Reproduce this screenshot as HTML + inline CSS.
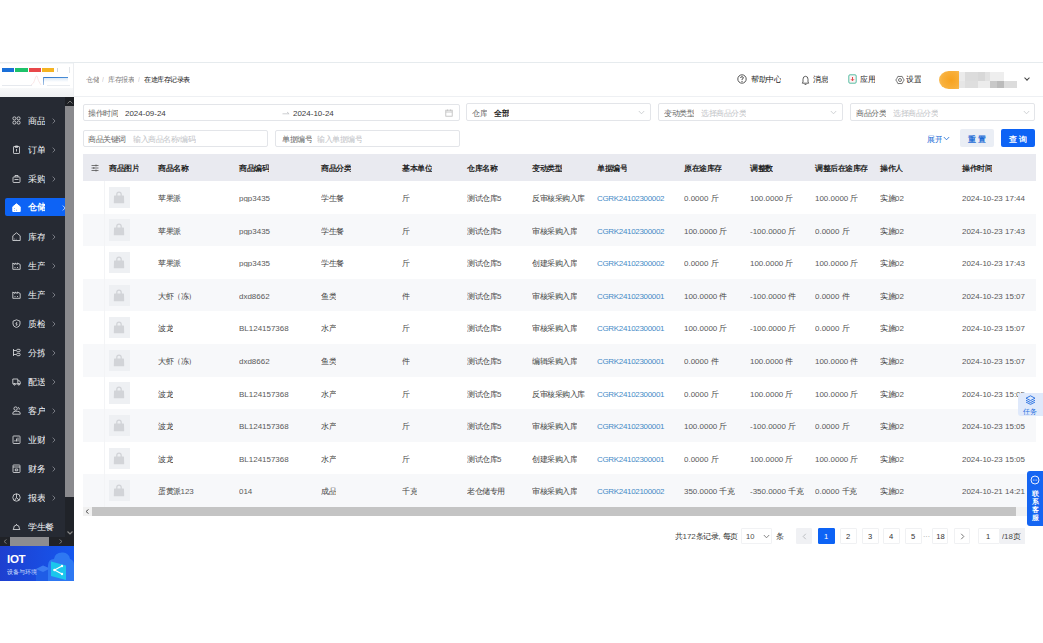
<!DOCTYPE html><html><head><meta charset="utf-8"><style>*{box-sizing:border-box;margin:0;padding:0}
html,body{width:1043px;height:643px;overflow:hidden;background:#fff}
body{position:relative;font-family:"Liberation Sans",sans-serif;color:#333}
.a{position:absolute;white-space:nowrap}
.topline{left:0;top:62px;width:1043px;height:1px;background:#e6ebee}
.logo{left:0;top:63px;width:74px;height:34px;background:#fff;border-right:1px solid #eceef1}
.logo .band{position:absolute;left:0;top:24.5px;width:73px;height:9.5px;background:linear-gradient(#f8f9fa,#eff0f2)}
.bar{position:absolute;top:5.3px;height:3.6px}
.hdr{left:74px;top:63px;width:969px;height:34px;background:#fff;border-bottom:1px solid #eef0f3}
.bc{font-size:6.5px;top:77px;line-height:7px;color:#8a8a8a}
.hi{font-size:7.6px;top:75px;line-height:9px;color:#333}
.side{left:0;top:97px;width:74px;height:448.5px;background:#262a33;overflow:hidden}
.mi{position:absolute;left:0;width:65px;height:18px;color:#e9eaec;font-size:8.2px;line-height:18px}
.mi .ic{position:absolute;left:12px;top:4.5px;width:9px;height:9px}
.mi .t{position:absolute;left:27.5px;top:0}
.mi .ch{position:absolute;left:51px;top:0;color:#7b7f88;font-size:8px}
.mi.act{left:5px;width:60px;background:#0d63f5;border-radius:2px 0 0 2px;color:#fff;font-weight:bold}
.mi.act .ic{left:7.3px}.mi.act .t{left:23.4px}.mi.act .ch{left:57px;color:#cfe0ff}
.vs{position:absolute;left:65px;top:0;width:9px;height:440px;background:#202329}
.vs .up{position:absolute;left:0;top:0;width:9px;height:9px;background:#1d1f24}
.vs .th{position:absolute;left:0;top:9px;width:9px;height:391px;background:#8a8a8e}
.hs{position:absolute;left:0;top:440px;width:74px;height:8.5px;background:#202227}
.hs .th{position:absolute;left:10px;top:0;width:39px;height:8.5px;background:#8d8d90}
.iot{left:0;top:545.5px;width:74px;height:35px;background:linear-gradient(90deg,#1e3fcf,#1a4bdf 50%,#1557ee);overflow:hidden}
.box{position:absolute;border:1px solid #e3e5e9;border-radius:2px;background:#fff;font-size:7.6px;line-height:15.8px}
.box .l{position:absolute;top:0;color:#666}
.box .v{position:absolute;top:0;color:#222}
.box .p{position:absolute;top:0;color:#c2c4c8}
.btn{position:absolute;height:17.6px;border-radius:2px;font-size:7.6px;line-height:17.6px;text-align:center}
.thd{position:absolute;left:82.5px;top:154px;width:953px;height:27px;background:#e9eaf0}
.row{position:absolute;left:82.5px;width:953px;height:32.6px}
.row.g{background:#f7f8fa}
.tt{position:absolute;font-size:7.6px;line-height:9px;white-space:nowrap;color:#333}
.hd{font-weight:bold;color:#222}
.img{position:absolute;left:108.8px;width:21.2px;height:21.2px;background:#eef0f3}
.lnk{color:#2b7bc0}
.pg{position:absolute;top:528px;height:16px;width:16.5px;border:1px solid #eceef1;border-radius:2px;font-size:7.6px;line-height:14px;text-align:center;color:#333}
</style></head><body>
<div class="a topline"></div>
<div class="a logo">
  <div class="bar" style="left:2px;width:12px;background:#1a6fd8"></div>
  <div class="bar" style="left:15px;width:12.7px;background:#1ec26a"></div>
  <div class="bar" style="left:28.8px;width:11.8px;background:#e8484a"></div>
  <div class="bar" style="left:42px;width:12px;background:#f5b321"></div>
  <div style="position:absolute;left:43px;top:13.6px;width:25px;height:1.6px;background:linear-gradient(90deg,#2f76cc,#4b8fd6)"></div>
  <div style="position:absolute;left:43px;top:13.6px;width:0.9px;height:8px;background:linear-gradient(#5a8fcf,#a9c6e8)"></div>
  <div style="position:absolute;left:2px;top:22px;width:30px;height:0.8px;background:#e6e9ee"></div>
  <div style="position:absolute;left:44px;top:15px;width:24px;height:4px;background:linear-gradient(#dbe8f6,rgba(255,255,255,0))"></div>
  <div style="position:absolute;left:47px;top:22px;width:23px;height:0.6px;background:#e9ecf0"></div>
  <svg style="position:absolute;left:30px;top:10px" width="12" height="13" viewBox="0 0 12 13"><path d="M1 12 Q4 11 5 6 Q6 2 7 3 Q8 8 11 12" fill="none" stroke="#f5d8da" stroke-width="0.6"/></svg>
  <div style="position:absolute;left:57px;top:5px;width:0.8px;height:3.5px;background:#cfd3d8"></div>
  <div style="position:absolute;left:69px;top:4px;width:0.8px;height:6px;background:#e2e5e9"></div>
  <div style="position:absolute;left:0px;top:0px;width:73px;height:1px;background:#f4f6f8"></div>
  <div class="band"></div>
</div>
<div class="a hdr"></div>
<div class="a" style="left:85.60px;top:76.08px;font-size:13.00px;line-height:16.90px;color:#7a7a7a;font-weight:normal;transform:scale(.5);transform-origin:0 0;">仓储</div>
<div class="a" style="left:101.50px;top:76.08px;font-size:13.00px;line-height:16.90px;color:#c8c8c8;font-weight:normal;transform:scale(.5);transform-origin:0 0;">/</div>
<div class="a" style="left:107.80px;top:76.08px;font-size:13.00px;line-height:16.90px;color:#7a7a7a;font-weight:normal;transform:scale(.5);transform-origin:0 0;">库存报表</div>
<div class="a" style="left:137.50px;top:76.08px;font-size:13.00px;line-height:16.90px;color:#c8c8c8;font-weight:normal;transform:scale(.5);transform-origin:0 0;">/</div>
<div class="a" style="left:144.00px;top:76.08px;font-size:13.00px;line-height:16.90px;color:#111;font-weight:500;transform:scale(.5);transform-origin:0 0;">在途库存记录表</div>
<svg class="a" style="left:737px;top:74px" width="10" height="10" viewBox="0 0 10 10"><circle cx="5" cy="5" r="4.2" fill="none" stroke="#444" stroke-width="0.9"/><path d="M3.6 4 Q3.6 2.7 5 2.7 Q6.4 2.7 6.4 3.9 Q6.4 4.7 5 5.2 V6" fill="none" stroke="#444" stroke-width="0.9"/><circle cx="5" cy="7.4" r="0.55" fill="#444"/></svg>
<div class="a" style="left:751.00px;top:74.46px;font-size:15.20px;line-height:19.76px;color:#222;font-weight:normal;transform:scale(.5);transform-origin:0 0;">帮助中心</div>
<svg class="a" style="left:801px;top:74.5px" width="9" height="10.5" viewBox="0 0 9 10.5"><path d="M1.3 8.2 H7.7 L7 7 V4.2 Q7 1.3 4.5 1.3 Q2 1.3 2 4.2 V7 Z" fill="none" stroke="#444" stroke-width="0.85" stroke-linejoin="round"/><path d="M3.6 9.6 H5.4" stroke="#444" stroke-width="0.85"/></svg>
<div class="a" style="left:812.50px;top:74.46px;font-size:15.20px;line-height:19.76px;color:#222;font-weight:normal;transform:scale(.5);transform-origin:0 0;">消息</div>
<svg class="a" style="left:848px;top:74px" width="9" height="10" viewBox="0 0 9 10"><rect x="0.8" y="0.8" width="7.4" height="8.4" rx="1.2" fill="#fdf3f4" stroke="#45b89a" stroke-width="0.9"/><path d="M4.5 3 V6.6 M3 5.2 L4.5 6.8 L6 5.2" fill="none" stroke="#e5484d" stroke-width="1"/></svg>
<div class="a" style="left:860.00px;top:74.46px;font-size:15.20px;line-height:19.76px;color:#222;font-weight:normal;transform:scale(.5);transform-origin:0 0;">应用</div>
<svg class="a" style="left:894.5px;top:74.5px" width="10" height="10" viewBox="0 0 10 10"><path d="M9.20 5.00 L8.03 6.75 L7.10 8.64 L5.00 8.50 L2.90 8.64 L1.97 6.75 L0.80 5.00 L1.97 3.25 L2.90 1.36 L5.00 1.50 L7.10 1.36 L8.03 3.25 Z" fill="none" stroke="#555" stroke-width="0.8" stroke-linejoin="round"/><circle cx="5" cy="5" r="1.5" fill="none" stroke="#555" stroke-width="0.8"/></svg>
<div class="a" style="left:905.60px;top:74.46px;font-size:15.20px;line-height:19.76px;color:#222;font-weight:normal;transform:scale(.5);transform-origin:0 0;">设置</div>
<div class="a" style="left:939px;top:70.9px;width:19.5px;height:18px;border-radius:50% 0 0 50%;background:radial-gradient(circle at 60% 50%,#f7a21e,#f8b03c 60%,#fbc76b)"></div>
<div class="a" style="left:958.5px;top:72px;width:6.5px;height:9px;background:#ebebeb"></div>
<div class="a" style="left:965px;top:72px;width:13px;height:9px;background:#dcdcdc"></div>
<div class="a" style="left:978px;top:72px;width:7px;height:9px;background:#d8d8d8"></div>
<div class="a" style="left:985px;top:72px;width:5px;height:9px;background:#e2e2e2"></div>
<div class="a" style="left:990px;top:72px;width:13.5px;height:9px;background:#eeeeee"></div>
<div class="a" style="left:958.5px;top:81px;width:6.5px;height:7px;background:#e6e6e6"></div>
<div class="a" style="left:965px;top:81px;width:13px;height:7px;background:#dedede"></div>
<div class="a" style="left:978px;top:81px;width:12px;height:7px;background:#ececec"></div>
<div class="a" style="left:990px;top:81px;width:7px;height:7px;background:#c8c8c8"></div>
<div class="a" style="left:997px;top:81px;width:7px;height:7px;background:#bbbbbb"></div>
<div class="a" style="left:1004px;top:81px;width:13px;height:7px;background:#dcdcdc"></div>
<div class="a" style="left:1025px;top:75.5px;width:4px;height:4px;border-right:1px solid #444;border-bottom:1px solid #444;transform:rotate(45deg)"></div>
<div class="a side">
<svg style="position:absolute;left:12px;top:18.5px" width="9" height="9" viewBox="0 0 9 9" fill="none" stroke="#e6e7ea" stroke-width="0.8"><rect x="0.9" y="0.9" width="3" height="3" rx="1.3"/><rect x="5.1" y="0.9" width="3" height="3" rx="1.3"/><rect x="0.9" y="5.1" width="3" height="3" rx="1.3"/><rect x="5.1" y="5.1" width="3" height="3" rx="1.3"/></svg>
<div class="a" style="left:27.60px;top:18.67px;font-size:17.00px;line-height:22.10px;color:#f2f3f5;font-weight:normal;transform:scale(.5);transform-origin:0 0;">商品</div>
<svg style="position:absolute;left:51.6px;top:21.1px" width="4" height="6" viewBox="0 0 4 6"><path d="M0.7 0.6 L3 3 L0.7 5.4" fill="none" stroke="#8e9098" stroke-width="0.8"/></svg>
<svg style="position:absolute;left:12px;top:47.5px" width="9" height="9" viewBox="0 0 9 9" fill="none" stroke="#e6e7ea" stroke-width="0.8"><rect x="1.5" y="1.5" width="6" height="7" rx="0.6"/><path d="M3.3 1 H5.7 V2.4 H3.3 Z M4.5 4 V6.5"/></svg>
<div class="a" style="left:27.60px;top:47.67px;font-size:17.00px;line-height:22.10px;color:#f2f3f5;font-weight:normal;transform:scale(.5);transform-origin:0 0;">订单</div>
<svg style="position:absolute;left:51.6px;top:50.1px" width="4" height="6" viewBox="0 0 4 6"><path d="M0.7 0.6 L3 3 L0.7 5.4" fill="none" stroke="#8e9098" stroke-width="0.8"/></svg>
<svg style="position:absolute;left:12px;top:76.5px" width="9" height="9" viewBox="0 0 9 9" fill="none" stroke="#e6e7ea" stroke-width="0.8"><rect x="1" y="3" width="7" height="5.5" rx="0.6"/><path d="M3 3 V1.5 H6 V3 M2.5 5.5 H6.5"/></svg>
<div class="a" style="left:27.60px;top:76.67px;font-size:17.00px;line-height:22.10px;color:#f2f3f5;font-weight:normal;transform:scale(.5);transform-origin:0 0;">采购</div>
<svg style="position:absolute;left:51.6px;top:79.1px" width="4" height="6" viewBox="0 0 4 6"><path d="M0.7 0.6 L3 3 L0.7 5.4" fill="none" stroke="#8e9098" stroke-width="0.8"/></svg>
<div style="position:absolute;left:5px;top:101.0px;width:60px;height:18px;background:#0d63f5;border-radius:2px 0 0 2px"></div>
<svg style="position:absolute;left:12.3px;top:105.5px" width="9" height="9" viewBox="0 0 9 9" fill="none"><path d="M0.8 3.8 L4.5 0.8 L8.2 3.8 V8.5 H0.8 Z" fill="#fff" stroke="#fff"/><path d="M2.5 5.5 V6 M2.5 7 V7.4 M4 7.2 H4.6" stroke="#0d63f5" stroke-width="0.9"/></svg>
<div class="a" style="left:28.40px;top:105.37px;font-size:17.00px;line-height:22.10px;color:#fff;font-weight:bold;transform:scale(.5);transform-origin:0 0;">仓储</div>
<svg style="position:absolute;left:61.5px;top:107.7px" width="4" height="6" viewBox="0 0 4 6"><path d="M0.8 0.6 L3.2 3 L0.8 5.4" fill="none" stroke="#dce8ff" stroke-width="0.9"/></svg>
<svg style="position:absolute;left:12px;top:134.5px" width="9" height="9" viewBox="0 0 9 9" fill="none" stroke="#e6e7ea" stroke-width="0.8"><path d="M0.8 3.8 L4.5 0.8 L8.2 3.8 V8.5 H0.8 Z"/><path d="M2.5 6 V6.3 M2.5 7.2 V7.5 M3.8 7.3 H4.4"/></svg>
<div class="a" style="left:27.60px;top:134.68px;font-size:17.00px;line-height:22.10px;color:#f2f3f5;font-weight:normal;transform:scale(.5);transform-origin:0 0;">库存</div>
<svg style="position:absolute;left:51.6px;top:137.1px" width="4" height="6" viewBox="0 0 4 6"><path d="M0.7 0.6 L3 3 L0.7 5.4" fill="none" stroke="#8e9098" stroke-width="0.8"/></svg>
<svg style="position:absolute;left:12px;top:163.5px" width="9" height="9" viewBox="0 0 9 9" fill="none" stroke="#e6e7ea" stroke-width="0.8"><path d="M0.8 8.3 V2 L3 3.5 V2 L5.3 3.5 V2 L8.2 3.5 V8.3 Z M3 6 V7 M5.5 6 V7"/></svg>
<div class="a" style="left:27.60px;top:163.68px;font-size:17.00px;line-height:22.10px;color:#f2f3f5;font-weight:normal;transform:scale(.5);transform-origin:0 0;">生产</div>
<svg style="position:absolute;left:51.6px;top:166.1px" width="4" height="6" viewBox="0 0 4 6"><path d="M0.7 0.6 L3 3 L0.7 5.4" fill="none" stroke="#8e9098" stroke-width="0.8"/></svg>
<svg style="position:absolute;left:12px;top:192.5px" width="9" height="9" viewBox="0 0 9 9" fill="none" stroke="#e6e7ea" stroke-width="0.8"><path d="M0.8 8.3 V2 L3 3.5 V2 L5.3 3.5 V2 L8.2 3.5 V8.3 Z M3 6 V7 M5.5 6 V7"/></svg>
<div class="a" style="left:27.60px;top:192.68px;font-size:17.00px;line-height:22.10px;color:#f2f3f5;font-weight:normal;transform:scale(.5);transform-origin:0 0;">生产</div>
<svg style="position:absolute;left:51.6px;top:195.1px" width="4" height="6" viewBox="0 0 4 6"><path d="M0.7 0.6 L3 3 L0.7 5.4" fill="none" stroke="#8e9098" stroke-width="0.8"/></svg>
<svg style="position:absolute;left:12px;top:221.5px" width="9" height="9" viewBox="0 0 9 9" fill="none" stroke="#e6e7ea" stroke-width="0.8"><path d="M4.5 0.8 L8 2.2 V5 Q8 7.5 4.5 8.6 Q1 7.5 1 5 V2.2 Z M5 3 L3.8 5 H5.2 L4.2 6.8"/></svg>
<div class="a" style="left:27.60px;top:221.68px;font-size:17.00px;line-height:22.10px;color:#f2f3f5;font-weight:normal;transform:scale(.5);transform-origin:0 0;">质检</div>
<svg style="position:absolute;left:51.6px;top:224.1px" width="4" height="6" viewBox="0 0 4 6"><path d="M0.7 0.6 L3 3 L0.7 5.4" fill="none" stroke="#8e9098" stroke-width="0.8"/></svg>
<svg style="position:absolute;left:12px;top:250.5px" width="9" height="9" viewBox="0 0 9 9" fill="none" stroke="#e6e7ea" stroke-width="0.8"><path d="M1.5 1 V8 M1.5 2.5 H4.2 M1.5 6.5 H4.2"/><rect x="4.6" y="1.3" width="3.6" height="2.4" rx="1.1"/><rect x="4.6" y="5.3" width="3.6" height="2.4" rx="1.1"/></svg>
<div class="a" style="left:27.60px;top:250.67px;font-size:17.00px;line-height:22.10px;color:#f2f3f5;font-weight:normal;transform:scale(.5);transform-origin:0 0;">分拣</div>
<svg style="position:absolute;left:51.6px;top:253.1px" width="4" height="6" viewBox="0 0 4 6"><path d="M0.7 0.6 L3 3 L0.7 5.4" fill="none" stroke="#8e9098" stroke-width="0.8"/></svg>
<svg style="position:absolute;left:12px;top:279.5px" width="9" height="9" viewBox="0 0 9 9" fill="none" stroke="#e6e7ea" stroke-width="0.8"><path d="M0.8 2 H5.8 V6.8 H0.8 Z M5.8 3.8 H7.5 L8.3 5.2 V6.8 H5.8"/><circle cx="2.5" cy="7.4" r="0.8"/><circle cx="6.8" cy="7.4" r="0.8"/></svg>
<div class="a" style="left:27.60px;top:279.68px;font-size:17.00px;line-height:22.10px;color:#f2f3f5;font-weight:normal;transform:scale(.5);transform-origin:0 0;">配送</div>
<svg style="position:absolute;left:51.6px;top:282.1px" width="4" height="6" viewBox="0 0 4 6"><path d="M0.7 0.6 L3 3 L0.7 5.4" fill="none" stroke="#8e9098" stroke-width="0.8"/></svg>
<svg style="position:absolute;left:12px;top:308.5px" width="9" height="9" viewBox="0 0 9 9" fill="none" stroke="#e6e7ea" stroke-width="0.8"><circle cx="3.6" cy="2.6" r="1.7"/><path d="M0.8 8.2 V7.2 Q0.8 5.3 3.6 5.3 H5.4 Q8.2 5.3 8.2 7.2 V8.2 H0.8 Z M6.2 1.2 Q7.6 1.6 7.2 3.6"/></svg>
<div class="a" style="left:27.60px;top:308.68px;font-size:17.00px;line-height:22.10px;color:#f2f3f5;font-weight:normal;transform:scale(.5);transform-origin:0 0;">客户</div>
<svg style="position:absolute;left:51.6px;top:311.1px" width="4" height="6" viewBox="0 0 4 6"><path d="M0.7 0.6 L3 3 L0.7 5.4" fill="none" stroke="#8e9098" stroke-width="0.8"/></svg>
<svg style="position:absolute;left:12px;top:337.5px" width="9" height="9" viewBox="0 0 9 9" fill="none" stroke="#e6e7ea" stroke-width="0.8"><rect x="1" y="1" width="7" height="7.5" rx="0.6"/><path d="M3 6.5 V5 M4.5 6.5 V3.5 M6 6.5 V2.5"/></svg>
<div class="a" style="left:27.60px;top:337.68px;font-size:17.00px;line-height:22.10px;color:#f2f3f5;font-weight:normal;transform:scale(.5);transform-origin:0 0;">业财</div>
<svg style="position:absolute;left:51.6px;top:340.1px" width="4" height="6" viewBox="0 0 4 6"><path d="M0.7 0.6 L3 3 L0.7 5.4" fill="none" stroke="#8e9098" stroke-width="0.8"/></svg>
<svg style="position:absolute;left:12px;top:366.5px" width="9" height="9" viewBox="0 0 9 9" fill="none" stroke="#e6e7ea" stroke-width="0.8"><rect x="1" y="1" width="7" height="7.5" rx="0.6"/><path d="M1 3 H8 M3.3 5 H5.7 V6.8 H3.3 Z"/></svg>
<div class="a" style="left:27.60px;top:366.68px;font-size:17.00px;line-height:22.10px;color:#f2f3f5;font-weight:normal;transform:scale(.5);transform-origin:0 0;">财务</div>
<svg style="position:absolute;left:51.6px;top:369.1px" width="4" height="6" viewBox="0 0 4 6"><path d="M0.7 0.6 L3 3 L0.7 5.4" fill="none" stroke="#8e9098" stroke-width="0.8"/></svg>
<svg style="position:absolute;left:12px;top:395.5px" width="9" height="9" viewBox="0 0 9 9" fill="none" stroke="#e6e7ea" stroke-width="0.8"><circle cx="4.5" cy="4.5" r="3.7"/><path d="M4.5 0.8 V4.5 L7 7.2 M4.5 4.5 L2.5 7.5"/></svg>
<div class="a" style="left:27.60px;top:395.68px;font-size:17.00px;line-height:22.10px;color:#f2f3f5;font-weight:normal;transform:scale(.5);transform-origin:0 0;">报表</div>
<svg style="position:absolute;left:51.6px;top:398.1px" width="4" height="6" viewBox="0 0 4 6"><path d="M0.7 0.6 L3 3 L0.7 5.4" fill="none" stroke="#8e9098" stroke-width="0.8"/></svg>
<svg style="position:absolute;left:12px;top:424.5px" width="9" height="9" viewBox="0 0 9 9" fill="none" stroke="#e6e7ea" stroke-width="0.8"><path d="M0.8 7.5 H8.2 M1.5 7 Q1.5 3 4.5 3 Q7.5 3 7.5 7 M4.5 2 V3"/></svg>
<div class="a" style="left:27.60px;top:424.68px;font-size:17.00px;line-height:22.10px;color:#f2f3f5;font-weight:normal;transform:scale(.5);transform-origin:0 0;">学生餐</div>
<div class="vs"><div class="up"></div><div class="th"></div></div>
<svg style="position:absolute;left:66.5px;top:2.5px" width="6" height="4" viewBox="0 0 6 4"><path d="M0.5 3.5 L3 1 L5.5 3.5" fill="none" stroke="#777" stroke-width="1"/></svg>
<svg style="position:absolute;left:66.5px;top:434px" width="6" height="4" viewBox="0 0 6 4"><path d="M0.5 0.5 L3 3 L5.5 0.5" fill="none" stroke="#8a8a8a" stroke-width="1.1"/></svg>
<div class="hs"><div class="th"></div><svg style="position:absolute;left:2.5px;top:2px" width="4" height="5" viewBox="0 0 4 5"><path d="M3.5 0.5 L1 2.5 L3.5 4.5" fill="none" stroke="#777" stroke-width="1"/></svg><svg style="position:absolute;left:59px;top:2px" width="4" height="5" viewBox="0 0 4 5"><path d="M0.5 0.5 L3 2.5 L0.5 4.5" fill="none" stroke="#777" stroke-width="1"/></svg></div>
</div>
<div class="a iot">
<svg style="position:absolute;left:34px;top:3px" width="40" height="32" viewBox="0 0 40 32">
<path d="M2 20 L9 16.5 L16 19.5 L16 32 L2 32 Z" fill="#1f5de6"/>
<path d="M2 20 L9 16.5 L16 19.5 L9 23 Z" fill="#3b7cf2"/>
<path d="M14 16 Q14.5 10 20 10 Q21 3 29 3.5 Q35 4 36 10 Q40 11 40 16 L40 32 L14 32 Z" fill="#2f7af2" opacity="0.95"/>
<path d="M17 12.5 L32 16.5 L32 31 L17 27 Z" fill="#1bc6ec"/>
<path d="M20.5 21 L28 17 M20.5 21 L28 25" stroke="#fff" stroke-width="1.1"/><circle cx="20.5" cy="21" r="1.3" fill="#fff"/><circle cx="28" cy="17" r="1.2" fill="#fff"/><circle cx="28" cy="25" r="1.2" fill="#fff"/>
</svg>
<div class="a" style="left:7.00px;top:6.45px;font-size:22.00px;line-height:28.60px;color:#fff;font-weight:bold;transform:scale(.5);transform-origin:0 0;letter-spacing:-0.6px"><span style="font-size:1.05em">IOT</span></div>
<div class="a" style="left:7.00px;top:22.57px;font-size:12.40px;line-height:16.12px;color:#d5e0ff;font-weight:normal;transform:scale(.5);transform-origin:0 0;">设备与环境</div>
</div>
<div class="box" style="left:82.5px;top:103.5px;width:377.5px;height:17.799999999999997px"></div>
<div class="a" style="left:88.00px;top:107.66px;font-size:15.20px;line-height:19.76px;color:#666;font-weight:normal;transform:scale(.5);transform-origin:0 0;">操作时间</div>
<div class="a" style="left:125.00px;top:107.66px;font-size:15.20px;line-height:19.76px;color:#222;font-weight:normal;transform:scale(.5);transform-origin:0 0;"><span style="font-size:1.05em;opacity:.88">2024-09-24</span></div>
<svg class="a" style="left:281.5px;top:110.5px" width="8" height="5" viewBox="0 0 8 5"><path d="M0.5 2.8 H7 M5 1 L7.2 2.8" fill="none" stroke="#b8babe" stroke-width="0.7"/></svg>
<div class="a" style="left:292.80px;top:107.66px;font-size:15.20px;line-height:19.76px;color:#222;font-weight:normal;transform:scale(.5);transform-origin:0 0;"><span style="font-size:1.05em;opacity:.88">2024-10-24</span></div>
<svg class="a" style="left:445px;top:108.5px" width="8" height="8" viewBox="0 0 8 8"><rect x="0.8" y="1.2" width="6.4" height="6" fill="none" stroke="#bbb" stroke-width="0.8"/><path d="M0.8 3 H7.2 M2.5 0.5 V1.8 M5.5 0.5 V1.8" stroke="#bbb" stroke-width="0.8"/></svg>
<div class="box" style="left:466.3px;top:103.3px;width:184.40000000000003px;height:17.799999999999997px"></div>
<div class="a" style="left:472.00px;top:107.66px;font-size:15.20px;line-height:19.76px;color:#666;font-weight:normal;transform:scale(.5);transform-origin:0 0;">仓库</div>
<div class="a" style="left:494.00px;top:107.66px;font-size:15.20px;line-height:19.76px;color:#222;font-weight:bold;transform:scale(.5);transform-origin:0 0;">全部</div>
<svg class="a" style="left:638px;top:110.1px" width="7" height="5" viewBox="0 0 7 5"><path d="M0.8 1 L3.5 3.8 L6.2 1" fill="none" stroke="#c4c6ca" stroke-width="0.8"/></svg>
<div class="box" style="left:658.4px;top:103.3px;width:184.89999999999998px;height:18.0px"></div>
<div class="a" style="left:664.00px;top:107.66px;font-size:15.20px;line-height:19.76px;color:#666;font-weight:normal;transform:scale(.5);transform-origin:0 0;">变动类型</div>
<div class="a" style="left:701.00px;top:107.66px;font-size:15.20px;line-height:19.76px;color:#c0c2c6;font-weight:normal;transform:scale(.5);transform-origin:0 0;">选择商品分类</div>
<svg class="a" style="left:830px;top:110.1px" width="7" height="5" viewBox="0 0 7 5"><path d="M0.8 1 L3.5 3.8 L6.2 1" fill="none" stroke="#c4c6ca" stroke-width="0.8"/></svg>
<div class="box" style="left:850.3px;top:103.3px;width:185.10000000000014px;height:18.0px"></div>
<div class="a" style="left:856.30px;top:107.66px;font-size:15.20px;line-height:19.76px;color:#666;font-weight:normal;transform:scale(.5);transform-origin:0 0;">商品分类</div>
<div class="a" style="left:893.00px;top:107.66px;font-size:15.20px;line-height:19.76px;color:#c0c2c6;font-weight:normal;transform:scale(.5);transform-origin:0 0;">选择商品分类</div>
<svg class="a" style="left:1023px;top:110.1px" width="7" height="5" viewBox="0 0 7 5"><path d="M0.8 1 L3.5 3.8 L6.2 1" fill="none" stroke="#c4c6ca" stroke-width="0.8"/></svg>
<div class="box" style="left:82.5px;top:129.5px;width:185.0px;height:17.69999999999999px"></div>
<div class="a" style="left:88.00px;top:133.56px;font-size:15.20px;line-height:19.76px;color:#666;font-weight:normal;transform:scale(.5);transform-origin:0 0;">商品关键词</div>
<div class="a" style="left:132.50px;top:133.56px;font-size:15.20px;line-height:19.76px;color:#c0c2c6;font-weight:normal;transform:scale(.5);transform-origin:0 0;">输入商品名称/编码</div>
<div class="box" style="left:274.5px;top:129.5px;width:185.5px;height:17.69999999999999px"></div>
<div class="a" style="left:282.00px;top:133.56px;font-size:15.20px;line-height:19.76px;color:#666;font-weight:normal;transform:scale(.5);transform-origin:0 0;">单据编号</div>
<div class="a" style="left:316.60px;top:133.56px;font-size:15.20px;line-height:19.76px;color:#c0c2c6;font-weight:normal;transform:scale(.5);transform-origin:0 0;">输入单据编号</div>
<div class="a" style="left:927.00px;top:133.56px;font-size:15.20px;line-height:19.76px;color:#1a6ad6;font-weight:normal;transform:scale(.5);transform-origin:0 0;">展开</div>
<svg class="a" style="left:942.5px;top:136.0px" width="7" height="5" viewBox="0 0 7 5"><path d="M0.8 1 L3.5 3.8 L6.2 1" fill="none" stroke="#1a6ad6" stroke-width="0.8"/></svg>
<div class="a" style="left:960px;top:129.2px;width:34px;height:17.6px;background:#eaeef5;border-radius:2px"></div>
<div class="a" style="left:967.50px;top:133.56px;font-size:15.20px;line-height:19.76px;color:#1a6ad6;font-weight:bold;transform:scale(.5);transform-origin:0 0;">重 置</div>
<div class="a" style="left:1000.6px;top:129.2px;width:34.8px;height:17.6px;background:#0d63f5;border-radius:2px"></div>
<div class="a" style="left:1008.50px;top:133.56px;font-size:15.20px;line-height:19.76px;color:#fff;font-weight:bold;transform:scale(.5);transform-origin:0 0;">查 询</div>
<div class="thd"></div>
<div class="a" style="left:108.80px;top:162.56px;font-size:15.20px;line-height:19.76px;color:#222;font-weight:bold;transform:scale(.5);transform-origin:0 0;">商品图片</div>
<div class="a" style="left:157.80px;top:162.56px;font-size:15.20px;line-height:19.76px;color:#222;font-weight:bold;transform:scale(.5);transform-origin:0 0;">商品名称</div>
<div class="a" style="left:239.20px;top:162.56px;font-size:15.20px;line-height:19.76px;color:#222;font-weight:bold;transform:scale(.5);transform-origin:0 0;">商品编码</div>
<div class="a" style="left:321.00px;top:162.56px;font-size:15.20px;line-height:19.76px;color:#222;font-weight:bold;transform:scale(.5);transform-origin:0 0;">商品分类</div>
<div class="a" style="left:402.00px;top:162.56px;font-size:15.20px;line-height:19.76px;color:#222;font-weight:bold;transform:scale(.5);transform-origin:0 0;">基本单位</div>
<div class="a" style="left:467.00px;top:162.56px;font-size:15.20px;line-height:19.76px;color:#222;font-weight:bold;transform:scale(.5);transform-origin:0 0;">仓库名称</div>
<div class="a" style="left:532.40px;top:162.56px;font-size:15.20px;line-height:19.76px;color:#222;font-weight:bold;transform:scale(.5);transform-origin:0 0;">变动类型</div>
<div class="a" style="left:597.30px;top:162.56px;font-size:15.20px;line-height:19.76px;color:#222;font-weight:bold;transform:scale(.5);transform-origin:0 0;">单据编号</div>
<div class="a" style="left:684.30px;top:162.56px;font-size:15.20px;line-height:19.76px;color:#222;font-weight:bold;transform:scale(.5);transform-origin:0 0;">原在途库存</div>
<div class="a" style="left:750.00px;top:162.56px;font-size:15.20px;line-height:19.76px;color:#222;font-weight:bold;transform:scale(.5);transform-origin:0 0;">调整数</div>
<div class="a" style="left:815.00px;top:162.56px;font-size:15.20px;line-height:19.76px;color:#222;font-weight:bold;transform:scale(.5);transform-origin:0 0;">调整后在途库存</div>
<div class="a" style="left:880.00px;top:162.56px;font-size:15.20px;line-height:19.76px;color:#222;font-weight:bold;transform:scale(.5);transform-origin:0 0;">操作人</div>
<div class="a" style="left:962.00px;top:162.56px;font-size:15.20px;line-height:19.76px;color:#222;font-weight:bold;transform:scale(.5);transform-origin:0 0;">操作时间</div>
<svg class="a" style="left:90.5px;top:163.5px" width="8" height="8" viewBox="0 0 8 8"><path d="M0.5 1.5 H7.5 M0.5 4 H7.5 M0.5 6.5 H7.5" stroke="#555" stroke-width="0.8"/><path d="M5 0.5 V2.5 M2.8 3 V5 M5 5.5 V7.5" stroke="#555" stroke-width="0.8"/></svg>
<div class="row" style="top:181.00px"></div>
<div class="a" style="left:103.5px;top:181.00px;width:0.6px;height:32.6px;background:#f3f4f6"></div>
<div class="img" style="top:186.80px"><svg style="position:absolute;left:4.6px;top:4px" width="12" height="13" viewBox="0 0 12 13"><path d="M3.8 5 V3.6 Q3.8 1.2 6 1.2 Q8.2 1.2 8.2 3.6 V5" fill="none" stroke="#d2d4d8" stroke-width="1.3"/><path d="M1.6 4.6 H10.4 Q11 4.6 11 5.3 L11.2 11.8 Q11.2 12.3 10.6 12.3 H1.4 Q0.8 12.3 0.8 11.8 L1 5.3 Q1 4.6 1.6 4.6 Z" fill="#d2d4d8"/></svg></div>
<div class="a" style="left:157.80px;top:193.06px;font-size:15.20px;line-height:19.76px;color:#444;font-weight:normal;transform:scale(.5);transform-origin:0 0;">苹果派</div>
<div class="a" style="left:239.20px;top:193.06px;font-size:15.20px;line-height:19.76px;color:#444;font-weight:normal;transform:scale(.5);transform-origin:0 0;"><span style="font-size:1.05em;opacity:.88">pgp3435</span></div>
<div class="a" style="left:321.00px;top:193.06px;font-size:15.20px;line-height:19.76px;color:#444;font-weight:normal;transform:scale(.5);transform-origin:0 0;">学生餐</div>
<div class="a" style="left:402.00px;top:193.06px;font-size:15.20px;line-height:19.76px;color:#444;font-weight:normal;transform:scale(.5);transform-origin:0 0;">斤</div>
<div class="a" style="left:467.00px;top:193.06px;font-size:15.20px;line-height:19.76px;color:#444;font-weight:normal;transform:scale(.5);transform-origin:0 0;">测试仓库<span style="font-size:1.05em;opacity:.88">5</span></div>
<div class="a" style="left:532.40px;top:193.06px;font-size:15.20px;line-height:19.76px;color:#444;font-weight:normal;transform:scale(.5);transform-origin:0 0;">反审核采购入库</div>
<div class="a" style="left:597.30px;top:193.06px;font-size:15.20px;line-height:19.76px;color:#2b7bc0;font-weight:normal;transform:scale(.5);transform-origin:0 0;letter-spacing:-0.62px"><span style="font-size:1.05em;opacity:.88">CGRK24102300002</span></div>
<div class="a" style="left:684.30px;top:193.06px;font-size:15.20px;line-height:19.76px;color:#444;font-weight:normal;transform:scale(.5);transform-origin:0 0;"><span style="font-size:1.05em;opacity:.88">0.0000</span> 斤</div>
<div class="a" style="left:750.00px;top:193.06px;font-size:15.20px;line-height:19.76px;color:#444;font-weight:normal;transform:scale(.5);transform-origin:0 0;"><span style="font-size:1.05em;opacity:.88">100.0000</span> 斤</div>
<div class="a" style="left:815.00px;top:193.06px;font-size:15.20px;line-height:19.76px;color:#444;font-weight:normal;transform:scale(.5);transform-origin:0 0;"><span style="font-size:1.05em;opacity:.88">100.0000</span> 斤</div>
<div class="a" style="left:880.00px;top:193.06px;font-size:15.20px;line-height:19.76px;color:#444;font-weight:normal;transform:scale(.5);transform-origin:0 0;">实施<span style="font-size:1.05em;opacity:.88">02</span></div>
<div class="a" style="left:962.00px;top:193.06px;font-size:15.20px;line-height:19.76px;color:#444;font-weight:normal;transform:scale(.5);transform-origin:0 0;"><span style="font-size:1.05em;opacity:.88">2024-10-23 17:44</span></div>
<div class="row g" style="top:213.60px"></div>
<div class="a" style="left:103.5px;top:213.60px;width:0.6px;height:32.6px;background:#f3f4f6"></div>
<div class="img" style="top:219.40px"><svg style="position:absolute;left:4.6px;top:4px" width="12" height="13" viewBox="0 0 12 13"><path d="M3.8 5 V3.6 Q3.8 1.2 6 1.2 Q8.2 1.2 8.2 3.6 V5" fill="none" stroke="#d2d4d8" stroke-width="1.3"/><path d="M1.6 4.6 H10.4 Q11 4.6 11 5.3 L11.2 11.8 Q11.2 12.3 10.6 12.3 H1.4 Q0.8 12.3 0.8 11.8 L1 5.3 Q1 4.6 1.6 4.6 Z" fill="#d2d4d8"/></svg></div>
<div class="a" style="left:157.80px;top:225.66px;font-size:15.20px;line-height:19.76px;color:#444;font-weight:normal;transform:scale(.5);transform-origin:0 0;">苹果派</div>
<div class="a" style="left:239.20px;top:225.66px;font-size:15.20px;line-height:19.76px;color:#444;font-weight:normal;transform:scale(.5);transform-origin:0 0;"><span style="font-size:1.05em;opacity:.88">pgp3435</span></div>
<div class="a" style="left:321.00px;top:225.66px;font-size:15.20px;line-height:19.76px;color:#444;font-weight:normal;transform:scale(.5);transform-origin:0 0;">学生餐</div>
<div class="a" style="left:402.00px;top:225.66px;font-size:15.20px;line-height:19.76px;color:#444;font-weight:normal;transform:scale(.5);transform-origin:0 0;">斤</div>
<div class="a" style="left:467.00px;top:225.66px;font-size:15.20px;line-height:19.76px;color:#444;font-weight:normal;transform:scale(.5);transform-origin:0 0;">测试仓库<span style="font-size:1.05em;opacity:.88">5</span></div>
<div class="a" style="left:532.40px;top:225.66px;font-size:15.20px;line-height:19.76px;color:#444;font-weight:normal;transform:scale(.5);transform-origin:0 0;">审核采购入库</div>
<div class="a" style="left:597.30px;top:225.66px;font-size:15.20px;line-height:19.76px;color:#2b7bc0;font-weight:normal;transform:scale(.5);transform-origin:0 0;letter-spacing:-0.62px"><span style="font-size:1.05em;opacity:.88">CGRK24102300002</span></div>
<div class="a" style="left:684.30px;top:225.66px;font-size:15.20px;line-height:19.76px;color:#444;font-weight:normal;transform:scale(.5);transform-origin:0 0;"><span style="font-size:1.05em;opacity:.88">100.0000</span> 斤</div>
<div class="a" style="left:750.00px;top:225.66px;font-size:15.20px;line-height:19.76px;color:#444;font-weight:normal;transform:scale(.5);transform-origin:0 0;"><span style="font-size:1.05em;opacity:.88">-100.0000</span> 斤</div>
<div class="a" style="left:815.00px;top:225.66px;font-size:15.20px;line-height:19.76px;color:#444;font-weight:normal;transform:scale(.5);transform-origin:0 0;"><span style="font-size:1.05em;opacity:.88">0.0000</span> 斤</div>
<div class="a" style="left:880.00px;top:225.66px;font-size:15.20px;line-height:19.76px;color:#444;font-weight:normal;transform:scale(.5);transform-origin:0 0;">实施<span style="font-size:1.05em;opacity:.88">02</span></div>
<div class="a" style="left:962.00px;top:225.66px;font-size:15.20px;line-height:19.76px;color:#444;font-weight:normal;transform:scale(.5);transform-origin:0 0;"><span style="font-size:1.05em;opacity:.88">2024-10-23 17:43</span></div>
<div class="row" style="top:246.20px"></div>
<div class="a" style="left:103.5px;top:246.20px;width:0.6px;height:32.6px;background:#f3f4f6"></div>
<div class="img" style="top:252.00px"><svg style="position:absolute;left:4.6px;top:4px" width="12" height="13" viewBox="0 0 12 13"><path d="M3.8 5 V3.6 Q3.8 1.2 6 1.2 Q8.2 1.2 8.2 3.6 V5" fill="none" stroke="#d2d4d8" stroke-width="1.3"/><path d="M1.6 4.6 H10.4 Q11 4.6 11 5.3 L11.2 11.8 Q11.2 12.3 10.6 12.3 H1.4 Q0.8 12.3 0.8 11.8 L1 5.3 Q1 4.6 1.6 4.6 Z" fill="#d2d4d8"/></svg></div>
<div class="a" style="left:157.80px;top:258.26px;font-size:15.20px;line-height:19.76px;color:#444;font-weight:normal;transform:scale(.5);transform-origin:0 0;">苹果派</div>
<div class="a" style="left:239.20px;top:258.26px;font-size:15.20px;line-height:19.76px;color:#444;font-weight:normal;transform:scale(.5);transform-origin:0 0;"><span style="font-size:1.05em;opacity:.88">pgp3435</span></div>
<div class="a" style="left:321.00px;top:258.26px;font-size:15.20px;line-height:19.76px;color:#444;font-weight:normal;transform:scale(.5);transform-origin:0 0;">学生餐</div>
<div class="a" style="left:402.00px;top:258.26px;font-size:15.20px;line-height:19.76px;color:#444;font-weight:normal;transform:scale(.5);transform-origin:0 0;">斤</div>
<div class="a" style="left:467.00px;top:258.26px;font-size:15.20px;line-height:19.76px;color:#444;font-weight:normal;transform:scale(.5);transform-origin:0 0;">测试仓库<span style="font-size:1.05em;opacity:.88">5</span></div>
<div class="a" style="left:532.40px;top:258.26px;font-size:15.20px;line-height:19.76px;color:#444;font-weight:normal;transform:scale(.5);transform-origin:0 0;">创建采购入库</div>
<div class="a" style="left:597.30px;top:258.26px;font-size:15.20px;line-height:19.76px;color:#2b7bc0;font-weight:normal;transform:scale(.5);transform-origin:0 0;letter-spacing:-0.62px"><span style="font-size:1.05em;opacity:.88">CGRK24102300002</span></div>
<div class="a" style="left:684.30px;top:258.26px;font-size:15.20px;line-height:19.76px;color:#444;font-weight:normal;transform:scale(.5);transform-origin:0 0;"><span style="font-size:1.05em;opacity:.88">0.0000</span> 斤</div>
<div class="a" style="left:750.00px;top:258.26px;font-size:15.20px;line-height:19.76px;color:#444;font-weight:normal;transform:scale(.5);transform-origin:0 0;"><span style="font-size:1.05em;opacity:.88">100.0000</span> 斤</div>
<div class="a" style="left:815.00px;top:258.26px;font-size:15.20px;line-height:19.76px;color:#444;font-weight:normal;transform:scale(.5);transform-origin:0 0;"><span style="font-size:1.05em;opacity:.88">100.0000</span> 斤</div>
<div class="a" style="left:880.00px;top:258.26px;font-size:15.20px;line-height:19.76px;color:#444;font-weight:normal;transform:scale(.5);transform-origin:0 0;">实施<span style="font-size:1.05em;opacity:.88">02</span></div>
<div class="a" style="left:962.00px;top:258.26px;font-size:15.20px;line-height:19.76px;color:#444;font-weight:normal;transform:scale(.5);transform-origin:0 0;"><span style="font-size:1.05em;opacity:.88">2024-10-23 17:43</span></div>
<div class="row g" style="top:278.80px"></div>
<div class="a" style="left:103.5px;top:278.80px;width:0.6px;height:32.6px;background:#f3f4f6"></div>
<div class="img" style="top:284.60px"><svg style="position:absolute;left:4.6px;top:4px" width="12" height="13" viewBox="0 0 12 13"><path d="M3.8 5 V3.6 Q3.8 1.2 6 1.2 Q8.2 1.2 8.2 3.6 V5" fill="none" stroke="#d2d4d8" stroke-width="1.3"/><path d="M1.6 4.6 H10.4 Q11 4.6 11 5.3 L11.2 11.8 Q11.2 12.3 10.6 12.3 H1.4 Q0.8 12.3 0.8 11.8 L1 5.3 Q1 4.6 1.6 4.6 Z" fill="#d2d4d8"/></svg></div>
<div class="a" style="left:157.80px;top:290.86px;font-size:15.20px;line-height:19.76px;color:#444;font-weight:normal;transform:scale(.5);transform-origin:0 0;">大虾（冻）</div>
<div class="a" style="left:239.20px;top:290.86px;font-size:15.20px;line-height:19.76px;color:#444;font-weight:normal;transform:scale(.5);transform-origin:0 0;"><span style="font-size:1.05em;opacity:.88">dxd8662</span></div>
<div class="a" style="left:321.00px;top:290.86px;font-size:15.20px;line-height:19.76px;color:#444;font-weight:normal;transform:scale(.5);transform-origin:0 0;">鱼类</div>
<div class="a" style="left:402.00px;top:290.86px;font-size:15.20px;line-height:19.76px;color:#444;font-weight:normal;transform:scale(.5);transform-origin:0 0;">件</div>
<div class="a" style="left:467.00px;top:290.86px;font-size:15.20px;line-height:19.76px;color:#444;font-weight:normal;transform:scale(.5);transform-origin:0 0;">测试仓库<span style="font-size:1.05em;opacity:.88">5</span></div>
<div class="a" style="left:532.40px;top:290.86px;font-size:15.20px;line-height:19.76px;color:#444;font-weight:normal;transform:scale(.5);transform-origin:0 0;">审核采购入库</div>
<div class="a" style="left:597.30px;top:290.86px;font-size:15.20px;line-height:19.76px;color:#2b7bc0;font-weight:normal;transform:scale(.5);transform-origin:0 0;letter-spacing:-0.62px"><span style="font-size:1.05em;opacity:.88">CGRK24102300001</span></div>
<div class="a" style="left:684.30px;top:290.86px;font-size:15.20px;line-height:19.76px;color:#444;font-weight:normal;transform:scale(.5);transform-origin:0 0;"><span style="font-size:1.05em;opacity:.88">100.0000</span> 件</div>
<div class="a" style="left:750.00px;top:290.86px;font-size:15.20px;line-height:19.76px;color:#444;font-weight:normal;transform:scale(.5);transform-origin:0 0;"><span style="font-size:1.05em;opacity:.88">-100.0000</span> 件</div>
<div class="a" style="left:815.00px;top:290.86px;font-size:15.20px;line-height:19.76px;color:#444;font-weight:normal;transform:scale(.5);transform-origin:0 0;"><span style="font-size:1.05em;opacity:.88">0.0000</span> 件</div>
<div class="a" style="left:880.00px;top:290.86px;font-size:15.20px;line-height:19.76px;color:#444;font-weight:normal;transform:scale(.5);transform-origin:0 0;">实施<span style="font-size:1.05em;opacity:.88">02</span></div>
<div class="a" style="left:962.00px;top:290.86px;font-size:15.20px;line-height:19.76px;color:#444;font-weight:normal;transform:scale(.5);transform-origin:0 0;"><span style="font-size:1.05em;opacity:.88">2024-10-23 15:07</span></div>
<div class="row" style="top:311.40px"></div>
<div class="a" style="left:103.5px;top:311.40px;width:0.6px;height:32.6px;background:#f3f4f6"></div>
<div class="img" style="top:317.20px"><svg style="position:absolute;left:4.6px;top:4px" width="12" height="13" viewBox="0 0 12 13"><path d="M3.8 5 V3.6 Q3.8 1.2 6 1.2 Q8.2 1.2 8.2 3.6 V5" fill="none" stroke="#d2d4d8" stroke-width="1.3"/><path d="M1.6 4.6 H10.4 Q11 4.6 11 5.3 L11.2 11.8 Q11.2 12.3 10.6 12.3 H1.4 Q0.8 12.3 0.8 11.8 L1 5.3 Q1 4.6 1.6 4.6 Z" fill="#d2d4d8"/></svg></div>
<div class="a" style="left:157.80px;top:323.46px;font-size:15.20px;line-height:19.76px;color:#444;font-weight:normal;transform:scale(.5);transform-origin:0 0;">波龙</div>
<div class="a" style="left:239.20px;top:323.46px;font-size:15.20px;line-height:19.76px;color:#444;font-weight:normal;transform:scale(.5);transform-origin:0 0;"><span style="font-size:1.05em;opacity:.88">BL124157368</span></div>
<div class="a" style="left:321.00px;top:323.46px;font-size:15.20px;line-height:19.76px;color:#444;font-weight:normal;transform:scale(.5);transform-origin:0 0;">水产</div>
<div class="a" style="left:402.00px;top:323.46px;font-size:15.20px;line-height:19.76px;color:#444;font-weight:normal;transform:scale(.5);transform-origin:0 0;">斤</div>
<div class="a" style="left:467.00px;top:323.46px;font-size:15.20px;line-height:19.76px;color:#444;font-weight:normal;transform:scale(.5);transform-origin:0 0;">测试仓库<span style="font-size:1.05em;opacity:.88">5</span></div>
<div class="a" style="left:532.40px;top:323.46px;font-size:15.20px;line-height:19.76px;color:#444;font-weight:normal;transform:scale(.5);transform-origin:0 0;">审核采购入库</div>
<div class="a" style="left:597.30px;top:323.46px;font-size:15.20px;line-height:19.76px;color:#2b7bc0;font-weight:normal;transform:scale(.5);transform-origin:0 0;letter-spacing:-0.62px"><span style="font-size:1.05em;opacity:.88">CGRK24102300001</span></div>
<div class="a" style="left:684.30px;top:323.46px;font-size:15.20px;line-height:19.76px;color:#444;font-weight:normal;transform:scale(.5);transform-origin:0 0;"><span style="font-size:1.05em;opacity:.88">100.0000</span> 斤</div>
<div class="a" style="left:750.00px;top:323.46px;font-size:15.20px;line-height:19.76px;color:#444;font-weight:normal;transform:scale(.5);transform-origin:0 0;"><span style="font-size:1.05em;opacity:.88">-100.0000</span> 斤</div>
<div class="a" style="left:815.00px;top:323.46px;font-size:15.20px;line-height:19.76px;color:#444;font-weight:normal;transform:scale(.5);transform-origin:0 0;"><span style="font-size:1.05em;opacity:.88">0.0000</span> 斤</div>
<div class="a" style="left:880.00px;top:323.46px;font-size:15.20px;line-height:19.76px;color:#444;font-weight:normal;transform:scale(.5);transform-origin:0 0;">实施<span style="font-size:1.05em;opacity:.88">02</span></div>
<div class="a" style="left:962.00px;top:323.46px;font-size:15.20px;line-height:19.76px;color:#444;font-weight:normal;transform:scale(.5);transform-origin:0 0;"><span style="font-size:1.05em;opacity:.88">2024-10-23 15:07</span></div>
<div class="row g" style="top:344.00px"></div>
<div class="a" style="left:103.5px;top:344.00px;width:0.6px;height:32.6px;background:#f3f4f6"></div>
<div class="img" style="top:349.80px"><svg style="position:absolute;left:4.6px;top:4px" width="12" height="13" viewBox="0 0 12 13"><path d="M3.8 5 V3.6 Q3.8 1.2 6 1.2 Q8.2 1.2 8.2 3.6 V5" fill="none" stroke="#d2d4d8" stroke-width="1.3"/><path d="M1.6 4.6 H10.4 Q11 4.6 11 5.3 L11.2 11.8 Q11.2 12.3 10.6 12.3 H1.4 Q0.8 12.3 0.8 11.8 L1 5.3 Q1 4.6 1.6 4.6 Z" fill="#d2d4d8"/></svg></div>
<div class="a" style="left:157.80px;top:356.06px;font-size:15.20px;line-height:19.76px;color:#444;font-weight:normal;transform:scale(.5);transform-origin:0 0;">大虾（冻）</div>
<div class="a" style="left:239.20px;top:356.06px;font-size:15.20px;line-height:19.76px;color:#444;font-weight:normal;transform:scale(.5);transform-origin:0 0;"><span style="font-size:1.05em;opacity:.88">dxd8662</span></div>
<div class="a" style="left:321.00px;top:356.06px;font-size:15.20px;line-height:19.76px;color:#444;font-weight:normal;transform:scale(.5);transform-origin:0 0;">鱼类</div>
<div class="a" style="left:402.00px;top:356.06px;font-size:15.20px;line-height:19.76px;color:#444;font-weight:normal;transform:scale(.5);transform-origin:0 0;">件</div>
<div class="a" style="left:467.00px;top:356.06px;font-size:15.20px;line-height:19.76px;color:#444;font-weight:normal;transform:scale(.5);transform-origin:0 0;">测试仓库<span style="font-size:1.05em;opacity:.88">5</span></div>
<div class="a" style="left:532.40px;top:356.06px;font-size:15.20px;line-height:19.76px;color:#444;font-weight:normal;transform:scale(.5);transform-origin:0 0;">编辑采购入库</div>
<div class="a" style="left:597.30px;top:356.06px;font-size:15.20px;line-height:19.76px;color:#2b7bc0;font-weight:normal;transform:scale(.5);transform-origin:0 0;letter-spacing:-0.62px"><span style="font-size:1.05em;opacity:.88">CGRK24102300001</span></div>
<div class="a" style="left:684.30px;top:356.06px;font-size:15.20px;line-height:19.76px;color:#444;font-weight:normal;transform:scale(.5);transform-origin:0 0;"><span style="font-size:1.05em;opacity:.88">0.0000</span> 件</div>
<div class="a" style="left:750.00px;top:356.06px;font-size:15.20px;line-height:19.76px;color:#444;font-weight:normal;transform:scale(.5);transform-origin:0 0;"><span style="font-size:1.05em;opacity:.88">100.0000</span> 件</div>
<div class="a" style="left:815.00px;top:356.06px;font-size:15.20px;line-height:19.76px;color:#444;font-weight:normal;transform:scale(.5);transform-origin:0 0;"><span style="font-size:1.05em;opacity:.88">100.0000</span> 件</div>
<div class="a" style="left:880.00px;top:356.06px;font-size:15.20px;line-height:19.76px;color:#444;font-weight:normal;transform:scale(.5);transform-origin:0 0;">实施<span style="font-size:1.05em;opacity:.88">02</span></div>
<div class="a" style="left:962.00px;top:356.06px;font-size:15.20px;line-height:19.76px;color:#444;font-weight:normal;transform:scale(.5);transform-origin:0 0;"><span style="font-size:1.05em;opacity:.88">2024-10-23 15:07</span></div>
<div class="row" style="top:376.60px"></div>
<div class="a" style="left:103.5px;top:376.60px;width:0.6px;height:32.6px;background:#f3f4f6"></div>
<div class="img" style="top:382.40px"><svg style="position:absolute;left:4.6px;top:4px" width="12" height="13" viewBox="0 0 12 13"><path d="M3.8 5 V3.6 Q3.8 1.2 6 1.2 Q8.2 1.2 8.2 3.6 V5" fill="none" stroke="#d2d4d8" stroke-width="1.3"/><path d="M1.6 4.6 H10.4 Q11 4.6 11 5.3 L11.2 11.8 Q11.2 12.3 10.6 12.3 H1.4 Q0.8 12.3 0.8 11.8 L1 5.3 Q1 4.6 1.6 4.6 Z" fill="#d2d4d8"/></svg></div>
<div class="a" style="left:157.80px;top:388.66px;font-size:15.20px;line-height:19.76px;color:#444;font-weight:normal;transform:scale(.5);transform-origin:0 0;">波龙</div>
<div class="a" style="left:239.20px;top:388.66px;font-size:15.20px;line-height:19.76px;color:#444;font-weight:normal;transform:scale(.5);transform-origin:0 0;"><span style="font-size:1.05em;opacity:.88">BL124157368</span></div>
<div class="a" style="left:321.00px;top:388.66px;font-size:15.20px;line-height:19.76px;color:#444;font-weight:normal;transform:scale(.5);transform-origin:0 0;">水产</div>
<div class="a" style="left:402.00px;top:388.66px;font-size:15.20px;line-height:19.76px;color:#444;font-weight:normal;transform:scale(.5);transform-origin:0 0;">斤</div>
<div class="a" style="left:467.00px;top:388.66px;font-size:15.20px;line-height:19.76px;color:#444;font-weight:normal;transform:scale(.5);transform-origin:0 0;">测试仓库<span style="font-size:1.05em;opacity:.88">5</span></div>
<div class="a" style="left:532.40px;top:388.66px;font-size:15.20px;line-height:19.76px;color:#444;font-weight:normal;transform:scale(.5);transform-origin:0 0;">反审核采购入库</div>
<div class="a" style="left:597.30px;top:388.66px;font-size:15.20px;line-height:19.76px;color:#2b7bc0;font-weight:normal;transform:scale(.5);transform-origin:0 0;letter-spacing:-0.62px"><span style="font-size:1.05em;opacity:.88">CGRK24102300001</span></div>
<div class="a" style="left:684.30px;top:388.66px;font-size:15.20px;line-height:19.76px;color:#444;font-weight:normal;transform:scale(.5);transform-origin:0 0;"><span style="font-size:1.05em;opacity:.88">0.0000</span> 斤</div>
<div class="a" style="left:750.00px;top:388.66px;font-size:15.20px;line-height:19.76px;color:#444;font-weight:normal;transform:scale(.5);transform-origin:0 0;"><span style="font-size:1.05em;opacity:.88">100.0000</span> 斤</div>
<div class="a" style="left:815.00px;top:388.66px;font-size:15.20px;line-height:19.76px;color:#444;font-weight:normal;transform:scale(.5);transform-origin:0 0;"><span style="font-size:1.05em;opacity:.88">100.0000</span> 斤</div>
<div class="a" style="left:880.00px;top:388.66px;font-size:15.20px;line-height:19.76px;color:#444;font-weight:normal;transform:scale(.5);transform-origin:0 0;">实施<span style="font-size:1.05em;opacity:.88">02</span></div>
<div class="a" style="left:962.00px;top:388.66px;font-size:15.20px;line-height:19.76px;color:#444;font-weight:normal;transform:scale(.5);transform-origin:0 0;"><span style="font-size:1.05em;opacity:.88">2024-10-23 15:05</span></div>
<div class="row g" style="top:409.20px"></div>
<div class="a" style="left:103.5px;top:409.20px;width:0.6px;height:32.6px;background:#f3f4f6"></div>
<div class="img" style="top:415.00px"><svg style="position:absolute;left:4.6px;top:4px" width="12" height="13" viewBox="0 0 12 13"><path d="M3.8 5 V3.6 Q3.8 1.2 6 1.2 Q8.2 1.2 8.2 3.6 V5" fill="none" stroke="#d2d4d8" stroke-width="1.3"/><path d="M1.6 4.6 H10.4 Q11 4.6 11 5.3 L11.2 11.8 Q11.2 12.3 10.6 12.3 H1.4 Q0.8 12.3 0.8 11.8 L1 5.3 Q1 4.6 1.6 4.6 Z" fill="#d2d4d8"/></svg></div>
<div class="a" style="left:157.80px;top:421.26px;font-size:15.20px;line-height:19.76px;color:#444;font-weight:normal;transform:scale(.5);transform-origin:0 0;">波龙</div>
<div class="a" style="left:239.20px;top:421.26px;font-size:15.20px;line-height:19.76px;color:#444;font-weight:normal;transform:scale(.5);transform-origin:0 0;"><span style="font-size:1.05em;opacity:.88">BL124157368</span></div>
<div class="a" style="left:321.00px;top:421.26px;font-size:15.20px;line-height:19.76px;color:#444;font-weight:normal;transform:scale(.5);transform-origin:0 0;">水产</div>
<div class="a" style="left:402.00px;top:421.26px;font-size:15.20px;line-height:19.76px;color:#444;font-weight:normal;transform:scale(.5);transform-origin:0 0;">斤</div>
<div class="a" style="left:467.00px;top:421.26px;font-size:15.20px;line-height:19.76px;color:#444;font-weight:normal;transform:scale(.5);transform-origin:0 0;">测试仓库<span style="font-size:1.05em;opacity:.88">5</span></div>
<div class="a" style="left:532.40px;top:421.26px;font-size:15.20px;line-height:19.76px;color:#444;font-weight:normal;transform:scale(.5);transform-origin:0 0;">审核采购入库</div>
<div class="a" style="left:597.30px;top:421.26px;font-size:15.20px;line-height:19.76px;color:#2b7bc0;font-weight:normal;transform:scale(.5);transform-origin:0 0;letter-spacing:-0.62px"><span style="font-size:1.05em;opacity:.88">CGRK24102300001</span></div>
<div class="a" style="left:684.30px;top:421.26px;font-size:15.20px;line-height:19.76px;color:#444;font-weight:normal;transform:scale(.5);transform-origin:0 0;"><span style="font-size:1.05em;opacity:.88">100.0000</span> 斤</div>
<div class="a" style="left:750.00px;top:421.26px;font-size:15.20px;line-height:19.76px;color:#444;font-weight:normal;transform:scale(.5);transform-origin:0 0;"><span style="font-size:1.05em;opacity:.88">-100.0000</span> 斤</div>
<div class="a" style="left:815.00px;top:421.26px;font-size:15.20px;line-height:19.76px;color:#444;font-weight:normal;transform:scale(.5);transform-origin:0 0;"><span style="font-size:1.05em;opacity:.88">0.0000</span> 斤</div>
<div class="a" style="left:880.00px;top:421.26px;font-size:15.20px;line-height:19.76px;color:#444;font-weight:normal;transform:scale(.5);transform-origin:0 0;">实施<span style="font-size:1.05em;opacity:.88">02</span></div>
<div class="a" style="left:962.00px;top:421.26px;font-size:15.20px;line-height:19.76px;color:#444;font-weight:normal;transform:scale(.5);transform-origin:0 0;"><span style="font-size:1.05em;opacity:.88">2024-10-23 15:05</span></div>
<div class="row" style="top:441.80px"></div>
<div class="a" style="left:103.5px;top:441.80px;width:0.6px;height:32.6px;background:#f3f4f6"></div>
<div class="img" style="top:447.60px"><svg style="position:absolute;left:4.6px;top:4px" width="12" height="13" viewBox="0 0 12 13"><path d="M3.8 5 V3.6 Q3.8 1.2 6 1.2 Q8.2 1.2 8.2 3.6 V5" fill="none" stroke="#d2d4d8" stroke-width="1.3"/><path d="M1.6 4.6 H10.4 Q11 4.6 11 5.3 L11.2 11.8 Q11.2 12.3 10.6 12.3 H1.4 Q0.8 12.3 0.8 11.8 L1 5.3 Q1 4.6 1.6 4.6 Z" fill="#d2d4d8"/></svg></div>
<div class="a" style="left:157.80px;top:453.86px;font-size:15.20px;line-height:19.76px;color:#444;font-weight:normal;transform:scale(.5);transform-origin:0 0;">波龙</div>
<div class="a" style="left:239.20px;top:453.86px;font-size:15.20px;line-height:19.76px;color:#444;font-weight:normal;transform:scale(.5);transform-origin:0 0;"><span style="font-size:1.05em;opacity:.88">BL124157368</span></div>
<div class="a" style="left:321.00px;top:453.86px;font-size:15.20px;line-height:19.76px;color:#444;font-weight:normal;transform:scale(.5);transform-origin:0 0;">水产</div>
<div class="a" style="left:402.00px;top:453.86px;font-size:15.20px;line-height:19.76px;color:#444;font-weight:normal;transform:scale(.5);transform-origin:0 0;">斤</div>
<div class="a" style="left:467.00px;top:453.86px;font-size:15.20px;line-height:19.76px;color:#444;font-weight:normal;transform:scale(.5);transform-origin:0 0;">测试仓库<span style="font-size:1.05em;opacity:.88">5</span></div>
<div class="a" style="left:532.40px;top:453.86px;font-size:15.20px;line-height:19.76px;color:#444;font-weight:normal;transform:scale(.5);transform-origin:0 0;">创建采购入库</div>
<div class="a" style="left:597.30px;top:453.86px;font-size:15.20px;line-height:19.76px;color:#2b7bc0;font-weight:normal;transform:scale(.5);transform-origin:0 0;letter-spacing:-0.62px"><span style="font-size:1.05em;opacity:.88">CGRK24102300001</span></div>
<div class="a" style="left:684.30px;top:453.86px;font-size:15.20px;line-height:19.76px;color:#444;font-weight:normal;transform:scale(.5);transform-origin:0 0;"><span style="font-size:1.05em;opacity:.88">0.0000</span> 斤</div>
<div class="a" style="left:750.00px;top:453.86px;font-size:15.20px;line-height:19.76px;color:#444;font-weight:normal;transform:scale(.5);transform-origin:0 0;"><span style="font-size:1.05em;opacity:.88">100.0000</span> 斤</div>
<div class="a" style="left:815.00px;top:453.86px;font-size:15.20px;line-height:19.76px;color:#444;font-weight:normal;transform:scale(.5);transform-origin:0 0;"><span style="font-size:1.05em;opacity:.88">100.0000</span> 斤</div>
<div class="a" style="left:880.00px;top:453.86px;font-size:15.20px;line-height:19.76px;color:#444;font-weight:normal;transform:scale(.5);transform-origin:0 0;">实施<span style="font-size:1.05em;opacity:.88">02</span></div>
<div class="a" style="left:962.00px;top:453.86px;font-size:15.20px;line-height:19.76px;color:#444;font-weight:normal;transform:scale(.5);transform-origin:0 0;"><span style="font-size:1.05em;opacity:.88">2024-10-23 15:05</span></div>
<div class="row g" style="top:474.40px"></div>
<div class="a" style="left:103.5px;top:474.40px;width:0.6px;height:32.6px;background:#f3f4f6"></div>
<div class="img" style="top:480.20px"><svg style="position:absolute;left:4.6px;top:4px" width="12" height="13" viewBox="0 0 12 13"><path d="M3.8 5 V3.6 Q3.8 1.2 6 1.2 Q8.2 1.2 8.2 3.6 V5" fill="none" stroke="#d2d4d8" stroke-width="1.3"/><path d="M1.6 4.6 H10.4 Q11 4.6 11 5.3 L11.2 11.8 Q11.2 12.3 10.6 12.3 H1.4 Q0.8 12.3 0.8 11.8 L1 5.3 Q1 4.6 1.6 4.6 Z" fill="#d2d4d8"/></svg></div>
<div class="a" style="left:157.80px;top:486.46px;font-size:15.20px;line-height:19.76px;color:#444;font-weight:normal;transform:scale(.5);transform-origin:0 0;">蛋黄派<span style="font-size:1.05em;opacity:.88">123</span></div>
<div class="a" style="left:239.20px;top:486.46px;font-size:15.20px;line-height:19.76px;color:#444;font-weight:normal;transform:scale(.5);transform-origin:0 0;"><span style="font-size:1.05em;opacity:.88">014</span></div>
<div class="a" style="left:321.00px;top:486.46px;font-size:15.20px;line-height:19.76px;color:#444;font-weight:normal;transform:scale(.5);transform-origin:0 0;">成品</div>
<div class="a" style="left:402.00px;top:486.46px;font-size:15.20px;line-height:19.76px;color:#444;font-weight:normal;transform:scale(.5);transform-origin:0 0;">千克</div>
<div class="a" style="left:467.00px;top:486.46px;font-size:15.20px;line-height:19.76px;color:#444;font-weight:normal;transform:scale(.5);transform-origin:0 0;">老仓储专用</div>
<div class="a" style="left:532.40px;top:486.46px;font-size:15.20px;line-height:19.76px;color:#444;font-weight:normal;transform:scale(.5);transform-origin:0 0;">审核采购入库</div>
<div class="a" style="left:597.30px;top:486.46px;font-size:15.20px;line-height:19.76px;color:#2b7bc0;font-weight:normal;transform:scale(.5);transform-origin:0 0;letter-spacing:-0.62px"><span style="font-size:1.05em;opacity:.88">CGRK24102100002</span></div>
<div class="a" style="left:684.30px;top:486.46px;font-size:15.20px;line-height:19.76px;color:#444;font-weight:normal;transform:scale(.5);transform-origin:0 0;"><span style="font-size:1.05em;opacity:.88">350.0000</span> 千克</div>
<div class="a" style="left:750.00px;top:486.46px;font-size:15.20px;line-height:19.76px;color:#444;font-weight:normal;transform:scale(.5);transform-origin:0 0;"><span style="font-size:1.05em;opacity:.88">-350.0000</span> 千克</div>
<div class="a" style="left:815.00px;top:486.46px;font-size:15.20px;line-height:19.76px;color:#444;font-weight:normal;transform:scale(.5);transform-origin:0 0;"><span style="font-size:1.05em;opacity:.88">0.0000</span> 千克</div>
<div class="a" style="left:880.00px;top:486.46px;font-size:15.20px;line-height:19.76px;color:#444;font-weight:normal;transform:scale(.5);transform-origin:0 0;">实施<span style="font-size:1.05em;opacity:.88">02</span></div>
<div class="a" style="left:962.00px;top:486.46px;font-size:15.20px;line-height:19.76px;color:#444;font-weight:normal;transform:scale(.5);transform-origin:0 0;"><span style="font-size:1.05em;opacity:.88">2024-10-21 14:21</span></div>
<div class="a" style="left:82.5px;top:507px;width:953px;height:8.5px;background:#f1f1f1"></div>
<div class="a" style="left:92px;top:507px;width:924px;height:8.5px;background:#c4c4c4"></div>
<svg class="a" style="left:84.5px;top:509px" width="4" height="5" viewBox="0 0 4 5"><path d="M3.5 0.5 L1 2.5 L3.5 4.5" fill="none" stroke="#555" stroke-width="1"/></svg>
<div class="a" style="left:675.40px;top:531.06px;font-size:15.20px;line-height:19.76px;color:#333;font-weight:normal;transform:scale(.5);transform-origin:0 0;">共<span style="font-size:1.05em;opacity:.88">172</span>条记录, 每页</div>
<div class="a" style="left:740.8px;top:528px;width:31px;height:16px;border:1px solid #f1f2f4;border-radius:1px"></div>
<div class="a" style="left:746.00px;top:531.82px;font-size:14.40px;line-height:18.72px;color:#333;font-weight:normal;transform:scale(.5);transform-origin:0 0;"><span style="font-size:1.05em;opacity:.88">10</span></div>
<svg class="a" style="left:762.5px;top:533.5px" width="7" height="5" viewBox="0 0 7 5"><path d="M0.8 1 L3.5 3.8 L6.2 1" fill="none" stroke="#666" stroke-width="0.8"/></svg>
<div class="a" style="left:775.70px;top:531.06px;font-size:15.20px;line-height:19.76px;color:#333;font-weight:normal;transform:scale(.5);transform-origin:0 0;">条</div>
<div class="a" style="left:795.9px;top:528px;width:16.5px;height:16px;border:1px solid #f0f1f4;background:#f0f1f4;border-radius:1px"></div>
<div class="a" style="left:795.9px;top:530px;width:16.5px;height:12px;text-align:center"><span style="display:inline-block;font-size:15.2px;line-height:24px;color:#aaa;transform:scale(.5);transform-origin:50% 0"></span></div>
<svg class="a" style="left:802px;top:533px" width="5" height="7" viewBox="0 0 5 7"><path d="M3.8 0.8 L1.2 3.5 L3.8 6.2" fill="none" stroke="#b0b2b6" stroke-width="0.8"/></svg>
<div class="a" style="left:818px;top:528px;width:16.5px;height:16px;border:1px solid #0d63f5;background:#0d63f5;border-radius:1px"></div>
<div class="a" style="left:818px;top:530px;width:16.5px;height:12px;text-align:center"><span style="display:inline-block;font-size:15.2px;line-height:24px;color:#fff;transform:scale(.5);transform-origin:50% 0">1</span></div>
<div class="a" style="left:840px;top:528px;width:16.5px;height:16px;border:1px solid #f0f1f3;background:#fff;border-radius:1px"></div>
<div class="a" style="left:840px;top:530px;width:16.5px;height:12px;text-align:center"><span style="display:inline-block;font-size:15.2px;line-height:24px;color:#333;transform:scale(.5);transform-origin:50% 0">2</span></div>
<div class="a" style="left:862px;top:528px;width:16.5px;height:16px;border:1px solid #f0f1f3;background:#fff;border-radius:1px"></div>
<div class="a" style="left:862px;top:530px;width:16.5px;height:12px;text-align:center"><span style="display:inline-block;font-size:15.2px;line-height:24px;color:#333;transform:scale(.5);transform-origin:50% 0">3</span></div>
<div class="a" style="left:883px;top:528px;width:16.5px;height:16px;border:1px solid #f0f1f3;background:#fff;border-radius:1px"></div>
<div class="a" style="left:883px;top:530px;width:16.5px;height:12px;text-align:center"><span style="display:inline-block;font-size:15.2px;line-height:24px;color:#333;transform:scale(.5);transform-origin:50% 0">4</span></div>
<div class="a" style="left:905px;top:528px;width:16.5px;height:16px;border:1px solid #f0f1f3;background:#fff;border-radius:1px"></div>
<div class="a" style="left:905px;top:530px;width:16.5px;height:12px;text-align:center"><span style="display:inline-block;font-size:15.2px;line-height:24px;color:#333;transform:scale(.5);transform-origin:50% 0">5</span></div>
<div class="a" style="left:931.8px;top:528px;width:16.5px;height:16px;border:1px solid #f0f1f3;background:#fff;border-radius:1px"></div>
<div class="a" style="left:931.8px;top:530px;width:16.5px;height:12px;text-align:center"><span style="display:inline-block;font-size:15.2px;line-height:24px;color:#333;transform:scale(.5);transform-origin:50% 0">18</span></div>
<div class="a" style="left:953.8px;top:528px;width:16.5px;height:16px;border:1px solid #f0f1f3;background:#fff;border-radius:1px"></div>
<div class="a" style="left:953.8px;top:530px;width:16.5px;height:12px;text-align:center"><span style="display:inline-block;font-size:15.2px;line-height:24px;color:#333;transform:scale(.5);transform-origin:50% 0"></span></div>
<svg class="a" style="left:960px;top:533px" width="5" height="7" viewBox="0 0 5 7"><path d="M1.2 0.8 L3.8 3.5 L1.2 6.2" fill="none" stroke="#555" stroke-width="0.8"/></svg>
<div class="a" style="left:922.80px;top:532.45px;font-size:14.00px;line-height:18.20px;color:#999;font-weight:normal;transform:scale(.5);transform-origin:0 0;">···</div>
<div class="a" style="left:977.7px;top:528px;width:22px;height:16px;border:1px solid #f0f1f3;background:#fff;border-radius:1px"></div>
<div class="a" style="left:977.7px;top:530px;width:22px;height:12px;text-align:center"><span style="display:inline-block;font-size:15.2px;line-height:24px;color:#333;transform:scale(.5);transform-origin:50% 0">1</span></div>
<div class="a" style="left:1000px;top:528px;width:25.4px;height:16px;background:#f0f1f4"></div>
<div class="a" style="left:1001.50px;top:531.06px;font-size:15.20px;line-height:19.76px;color:#333;font-weight:normal;transform:scale(.5);transform-origin:0 0;">/<span style="font-size:1.05em;opacity:.88">18</span>页</div>
<div class="a" style="left:1017.5px;top:392.8px;width:26px;height:23.4px;background:#dfe9fb;border-radius:3px 0 0 3px"></div>
<svg class="a" style="left:1025px;top:395px" width="11" height="10" viewBox="0 0 11 10"><path d="M5.5 0.8 L10 3.2 L5.5 5.6 L1 3.2 Z" fill="none" stroke="#2a72e0" stroke-width="0.95" stroke-linejoin="round"/><path d="M1 5.2 L5.5 7.6 L10 5.2 M1 7.1 L5.5 9.4 L10 7.1" fill="none" stroke="#2a72e0" stroke-width="0.95"/></svg>
<div class="a" style="left:1022.50px;top:406.58px;font-size:13.60px;line-height:17.68px;color:#2a72e0;font-weight:normal;transform:scale(.5);transform-origin:0 0;">任务</div>
<div class="a" style="left:1026.8px;top:471px;width:16.2px;height:54.7px;background:#1565f2;border-radius:3px 0 0 3px"></div>
<svg class="a" style="left:1030px;top:475px" width="10" height="10" viewBox="0 0 10 10"><circle cx="5" cy="5" r="4" fill="none" stroke="#fff" stroke-width="0.9"/><circle cx="3.3" cy="5" r="0.5" fill="#fff"/><circle cx="5" cy="5" r="0.5" fill="#fff"/><circle cx="6.7" cy="5" r="0.5" fill="#fff"/></svg>
<div class="a" style="left:1031.50px;top:488.58px;font-size:13.60px;line-height:17.68px;color:#fff;font-weight:bold;transform:scale(.5);transform-origin:0 0;">联</div>
<div class="a" style="left:1031.50px;top:496.78px;font-size:13.60px;line-height:17.68px;color:#fff;font-weight:bold;transform:scale(.5);transform-origin:0 0;">系</div>
<div class="a" style="left:1031.50px;top:504.98px;font-size:13.60px;line-height:17.68px;color:#fff;font-weight:bold;transform:scale(.5);transform-origin:0 0;">客</div>
<div class="a" style="left:1031.50px;top:513.18px;font-size:13.60px;line-height:17.68px;color:#fff;font-weight:bold;transform:scale(.5);transform-origin:0 0;">服</div>
</body></html>
